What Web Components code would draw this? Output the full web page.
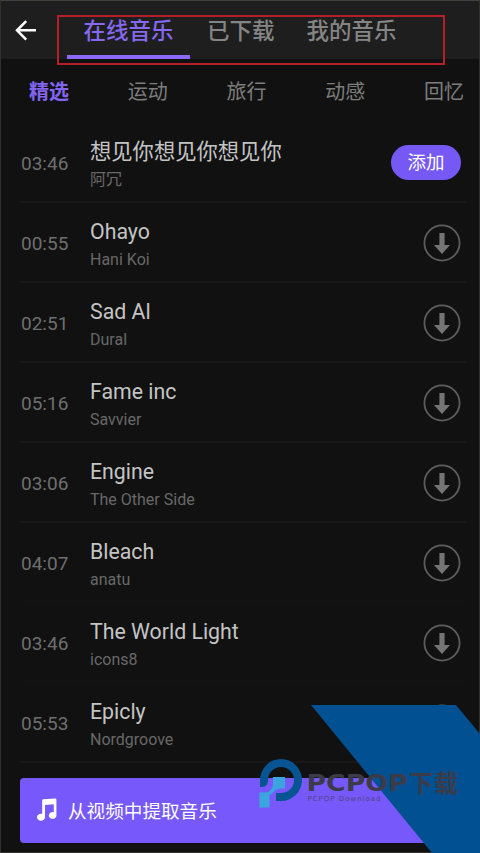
<!DOCTYPE html>
<html lang="zh-CN">
<head>
<meta charset="utf-8">
<title>在线音乐</title>
<style>
html,body{margin:0;padding:0;background:#111}
body{width:480px;height:853px;overflow:hidden}
</style>
</head>
<body>
<music-screen></music-screen>
<script>
const define=(name,html,init)=>customElements.define(name,class extends HTMLElement{
  constructor(){
    super();
    this.attachShadow({mode:'open'}).innerHTML=html;
  }
  connectedCallback(){ if(init) init(this,this.shadowRoot); }
});

define('top-tab',`<style>
:host{display:block;box-sizing:border-box;height:57px;flex:none;font-size:22.5px;font-weight:500;line-height:32px;padding-top:13px;color:#858585;white-space:nowrap;text-align:center}
:host([active]){color:#8569f0;border-bottom:4px solid #8a68f8}
</style><slot></slot>`);

define('top-bar',`<style>
:host{display:flex;box-sizing:border-box;height:59px;background:#1e1e1e;border-top:1px solid #41423e;position:relative}
svg{flex:none;width:24px;height:22px;margin:19px 29px 0 14px}
.tabs{display:flex;padding-top:1px}
.mark{position:absolute;left:57px;top:14px;width:384px;height:46px;border:2px solid #b61f29}
::slotted(:nth-child(2)){margin-left:17px}
::slotted(:nth-child(3)){margin-left:32px}
</style>
<svg viewBox="0 0 24 22" fill="none" stroke="#fff" stroke-width="2.5"><path d="M12.2 1.2 3 10.3l9.2 9.3M3 10.3h19"/></svg>
<div class="tabs"><slot></slot></div><div class="mark"></div>`);

define('genre-bar',`<style>
:host{display:flex;box-sizing:border-box;height:64px;padding:1px 16px 0 29px;justify-content:space-between;font-size:20px;line-height:64px;color:#7d7d7d}
::slotted([active]){color:#8266f2;font-weight:700}
</style><slot></slot>`);

define('download-button',`<style>
:host{display:block;width:38px;height:38px}svg{display:block}
</style><svg width="38" height="38" viewBox="0 0 38 38"><circle cx="19" cy="19" r="17.6" fill="none" stroke="#5d5d5d" stroke-width="1.8"/><path d="M16.4 9h5.2v12h5.4L19 30l-8-9h5.4z" fill="#747474"/></svg>`);

define('add-button',`<style>
:host{display:block;width:70px;height:35px;border-radius:18px;background:#7659f5;color:#fff;font-size:18.5px;font-weight:400;line-height:36px;text-align:center}
</style><slot></slot>`);

define('track-row',`<style>
:host{display:flex;align-items:center;box-sizing:border-box;height:80px;margin:0 13px 0 20px;border-bottom:2px solid #181818}
:host([plain]){border-color:#121212}
time{width:70px;flex:none;font-size:19px;color:#6e6e6e;padding-top:2px;padding-left:1px;box-sizing:border-box}
.info{flex:1;white-space:nowrap;padding-top:5px}
.t{font-size:21.3px;line-height:30px;height:30px;color:#c4c4c4}
.a{font-size:16px;line-height:24px;height:24px;color:#686868;margin-top:1px}
.action{padding:1px 6px 0 0}
</style><time></time><div class="info"><div class="t"></div><div class="a"></div></div><div class="action"><slot></slot></div>`,
(h,r)=>{
  r.querySelector('time').textContent=h.getAttribute('time');
  r.querySelector('.t').textContent=h.getAttribute('name');
  r.querySelector('.a').textContent=h.getAttribute('artist');
});

define('extract-button',`<style>
:host{display:flex;align-items:center;box-sizing:border-box;width:440px;height:65px;padding:0 0 2px 16px;margin:15px 0 0 20px;border-radius:4px;background:#7759fb;color:#fff;font-size:18.6px;font-weight:400}
svg{margin-right:10px;flex:none}
</style><svg width="22" height="24" viewBox="0 0 22 24" fill="#fff"><path d="M6.2 2.2Q6.3 1.4 7.1 1.3L19.3.4Q20.4.4 20.4 1.4V17.3A3.8 3.4 0 1 1 17.8 14.2V6.2L9 7V19A4 3.5 0 1 1 6.2 15.8Z"/></svg><slot></slot>`);

define('site-badge',`<style>
:host{display:block;position:absolute;left:240px;top:690px;width:240px;height:163px}
svg{display:block}
text{fill:#3b3b49}
</style><svg width="240" height="163" viewBox="0 0 240 163">
<path d="M71 15H216L240 44V163H192Z" fill="#005092"/>
<path d="M20 97V90A21 21 0 1 1 41 111H36V103H41A13 13 0 1 0 28 90Q28 97 22 97Z" fill="#075493"/>
<path d="M33 87H45V98.5H40Q36 99 34 101.5Q32 104.5 29.5 104.5V117.2L19.3 117.8V102.6H26Q29 102 31 99.5Q33 97 33 95Z" fill="#3aa5df"/>
<text x="66.500" y="101" font-family="'DejaVu Sans',sans-serif" font-weight="700" font-size="22.500" textLength="101" lengthAdjust="spacingAndGlyphs">PCPOP</text>
<text x="169" y="102" font-size="24" font-family="'Noto Sans CJK SC',sans-serif" font-weight="700" textLength="49">下载</text>
<text x="67.5" y="111" font-family="'DejaVu Sans',sans-serif" font-size="7" textLength="73" lengthAdjust="spacing" opacity=".7">PCPOP Download</text>
</svg>`);

define('music-screen',`<style>
:host{display:block;box-sizing:border-box;position:relative;width:480px;height:853px;overflow:hidden;background:#111;font-family:Roboto,'Noto Sans CJK SC',sans-serif}
.edge{position:absolute;inset:0;border:solid #30312f;border-width:0 1px 1px}
</style>
<top-bar><top-tab active style="width:123px">在线音乐</top-tab><top-tab>已下载</top-tab><top-tab>我的音乐</top-tab></top-bar>
<genre-bar><span active>精选</span><span>运动</span><span>旅行</span><span>动感</span><span>回忆</span></genre-bar>
<main></main>
<extract-button>从视频中提取音乐</extract-button>
<div class="edge"></div>
<site-badge></site-badge>`,(h,r)=>{
  const tracks=[['03:46','想见你想见你想见你','阿冗'],['00:55','Ohayo','Hani Koi'],['02:51','Sad Al','Dural'],['05:16','Fame inc','Savvier'],['03:06','Engine','The Other Side'],['04:07','Bleach','anatu'],['03:46','The World Light','icons8'],['05:53','Epicly','Nordgroove']];
  tracks.forEach(([time,name,artist],i)=>{
    const row=document.createElement('track-row');
    row.setAttribute('time',time);row.setAttribute('name',name);row.setAttribute('artist',artist);
    if(i===5||i===6)row.setAttribute('plain','');
    const b=document.createElement(i?'download-button':'add-button');
    if(!i)b.textContent='添加';
    row.append(b);
    r.querySelector('main').append(row);
  });
});
</script>
</body>
</html>
